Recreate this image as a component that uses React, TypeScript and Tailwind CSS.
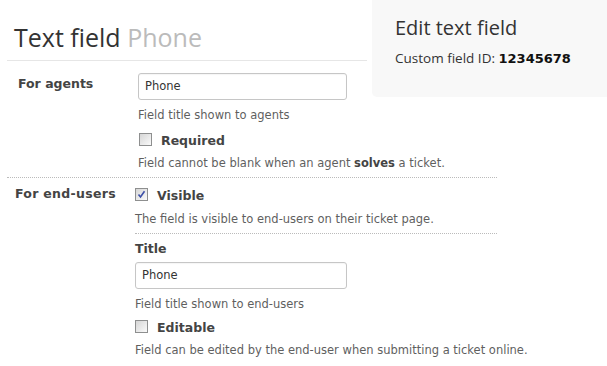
import React from 'react';

function Box({ checked = false }: { checked?: boolean }) {
  return (
    <span className="flex h-[13px] w-[13px] shrink-0 items-center justify-center border border-[#8e8f8f] bg-gradient-to-br from-[#d6d6d6] to-[#fafafa]">
      {checked && (
        <svg width="9" height="9" viewBox="0 0 9 9">
          <path d="M1.5 4.5 L3.5 7 L7.5 1.2" fill="none" stroke="#3c4fa8" strokeWidth="1.6" />
        </svg>
      )}
    </span>
  );
}

function Help({ children, className = '' }: { children: React.ReactNode; className?: string }) {
  return <p className={`whitespace-nowrap text-[11.5px] leading-[14px] text-[#5f5f5f] ${className}`}>{children}</p>;
}

function CheckRow({ label, checked, className = '' }: { label: string; checked?: boolean; className?: string }) {
  return (
    <div className={`flex items-start gap-[9px] ${className}`}>
      <Box checked={checked} />
      <span className="text-[12.5px] font-bold leading-[16px] text-[#444]">{label}</span>
    </div>
  );
}

function TextInput({ value, className = '' }: { value: string; className?: string }) {
  return (
    <div className={`flex h-[27px] items-center rounded-[3px] border border-[#c6c6c6] bg-white pl-[6px] text-[11.5px] text-[#333] shadow-[inset_0_1px_1px_rgba(0,0,0,0.04)] ${className}`}>
      {value}
    </div>
  );
}

export default function App() {
  return (
    <div
      className="grid h-[366px] w-[607px] grid-cols-[372px_235px] content-start overflow-hidden bg-white"
      style={{ fontFamily: '"DejaVu Sans", Verdana, sans-serif' }}
    >
      <div className="ml-[7px] mr-[5px] border-b border-[#e6e6e6] pb-[8px] pl-[7px] pt-[22px]" style={{ fontFamily: '"Open Sans", sans-serif' }}>
        <h1 className="text-[25px] leading-[30px] text-[#333]">
          Text field <span className="text-[#bbb]">Phone</span>
        </h1>
      </div>

      <div
        className="row-span-2 h-[97px] self-start rounded-bl-[5px] bg-[#f8f8f8] pl-[23px] pt-[15px]"
        style={{ fontFamily: '"Open Sans", sans-serif' }}
      >
        <h2 className="text-[20px] leading-[26px] text-[#333]">Edit text field</h2>
        <p className="mt-[8px] text-[13.5px] leading-[18px] text-[#333]">
          Custom field ID:{' '}
          <span className="text-[13px] font-bold text-[#111]" style={{ fontFamily: '"DejaVu Sans", Verdana, sans-serif' }}>
            12345678
          </span>
        </p>
      </div>

      <div className="ml-[7px] flex pb-[7px] pt-[12px]">
        <div className="w-[131px] shrink-0 pl-[11px] pt-[3px] text-[12.5px] font-bold leading-[16px] text-[#444]">For agents</div>
        <div className="flex flex-col">
          <TextInput value="Phone" className="w-[209px]" />
          <Help className="mt-[8px]">Field title shown to agents</Help>
          <CheckRow label="Required" className="mt-[11px] pl-[1px]" />
          <Help className="mt-[7px]">
            Field cannot be blank when an agent <b className="text-[#444]">solves</b> a ticket.
          </Help>
        </div>
      </div>

      <div className="col-span-2 ml-[7px] flex w-[490px] border-t border-dotted border-[#bbb] pt-[8px]">
        <div className="w-[128px] shrink-0 pl-[8px] text-[12.5px] font-bold leading-[16px] tracking-[0.3px] text-[#444]">For end-users</div>
        <div className="flex min-w-0 flex-1 flex-col pt-[2px]">
          <CheckRow label="Visible" checked />
          <Help className="mt-[8px]">The field is visible to end-users on their ticket page.</Help>
          <div className="mt-[7px] border-t border-dotted border-[#bbb]" />
          <div className="mt-[7px] text-[12.5px] font-bold leading-[16px] text-[#444]">Title</div>
          <TextInput value="Phone" className="mt-[5px] w-[212px]" />
          <Help className="mt-[8px]">Field title shown to end-users</Help>
          <CheckRow label="Editable" className="mt-[9px]" />
          <Help className="mt-[7px]">Field can be edited by the end-user when submitting a ticket online.</Help>
        </div>
      </div>
    </div>
  );
}
